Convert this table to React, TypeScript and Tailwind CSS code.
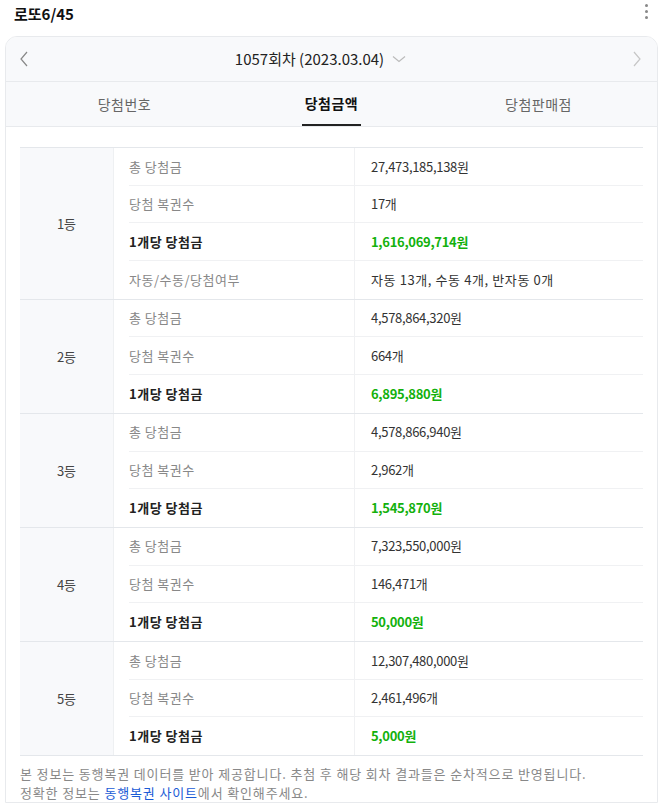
import React from 'react';

const FONT = '"Noto Sans CJK KR", "Noto Sans", sans-serif';

type Row = { label: string; value: string; strong?: boolean; wide?: boolean };

const ranks: { rank: string; rows: Row[] }[] = [
  {
    rank: '1등',
    rows: [
      { label: '총 당첨금', value: '27,473,185,138원' },
      { label: '당첨 복권수', value: '17개' },
      { label: '1개당 당첨금', value: '1,616,069,714원', strong: true },
      { label: '자동/수동/당첨여부', value: '자동 13개, 수동 4개, 반자동 0개', wide: true },
    ],
  },
  {
    rank: '2등',
    rows: [
      { label: '총 당첨금', value: '4,578,864,320원' },
      { label: '당첨 복권수', value: '664개' },
      { label: '1개당 당첨금', value: '6,895,880원', strong: true },
    ],
  },
  {
    rank: '3등',
    rows: [
      { label: '총 당첨금', value: '4,578,866,940원' },
      { label: '당첨 복권수', value: '2,962개' },
      { label: '1개당 당첨금', value: '1,545,870원', strong: true },
    ],
  },
  {
    rank: '4등',
    rows: [
      { label: '총 당첨금', value: '7,323,550,000원' },
      { label: '당첨 복권수', value: '146,471개' },
      { label: '1개당 당첨금', value: '50,000원', strong: true },
    ],
  },
  {
    rank: '5등',
    rows: [
      { label: '총 당첨금', value: '12,307,480,000원' },
      { label: '당첨 복권수', value: '2,461,496개' },
      { label: '1개당 당첨금', value: '5,000원', strong: true },
    ],
  },
];

function RankGroup({ rank, rows }: { rank: string; rows: Row[] }) {
  return (
    <div className="flex border-b border-[#e4e7eb]">
      <div className="w-[94px] shrink-0 bg-[#f8f9fb] flex items-center justify-center text-[13px] text-[#444] border-r border-[#eef0f2]">
        {rank}
      </div>
      <div className="flex-1 pl-[15px]">
        {rows.map((r, i) => (
          <div
            key={r.label}
            className={`flex h-[37.7px] items-center ${i < rows.length - 1 ? 'border-b border-[#f0f1f3]' : ''}`}
          >
            <div
              className={`w-[226px] shrink-0 h-full flex items-center border-r border-[#f0f1f3] text-[13px] tracking-[0.5px] ${
                r.strong ? 'font-bold text-[#222]' : 'text-[#888]'
              }`}
            >
              {r.label}
            </div>
            <div
              className={`pl-[16px] text-[13px] ${r.wide ? 'tracking-[0.6px]' : 'tracking-[-0.3px]'} ${
                r.strong ? 'font-bold text-[#13b10d]' : 'text-[#333]'
              }`}
            >
              {r.value}
            </div>
          </div>
        ))}
      </div>
    </div>
  );
}

export default function App() {
  return (
    <div className="w-[659px] h-[803px] overflow-hidden bg-white" style={{ fontFamily: FONT }}>
      <div className="h-[36px] flex items-start justify-between pl-[14px] pr-[10px] pt-[3px]">
        <h1 className="text-[15px] font-bold text-[#111] leading-[22px]">로또6/45</h1>
        <div className="flex flex-col gap-[3px] pt-[1px] items-center w-[6px]">
          <span className="w-[3px] h-[3px] rounded-full bg-[#888]" />
          <span className="w-[3px] h-[3px] rounded-full bg-[#888]" />
          <span className="w-[3px] h-[3px] rounded-full bg-[#888]" />
        </div>
      </div>

      <div className="ml-[5px] w-[653px] rounded-t-[12px] border border-[#e8eaed] bg-white overflow-hidden">
        <div className="bg-[#f8f9fb]">
          <div className="h-[45px] flex items-center justify-between pl-[12px] pr-[14px] border-b border-[#e8eaed]">
            <svg width="12" height="18" viewBox="0 0 12 18" fill="none">
              <path d="M9 2L3 9l6 7" stroke="#888" strokeWidth="1.2" />
            </svg>
            <div className="flex items-center gap-[8px] mr-[20px] text-[15px] text-[#222]">
              <span>1057회차 (2023.03.04)</span>
              <svg width="14" height="10" viewBox="0 0 14 10" fill="none">
                <path d="M1 2.5l6 5 6-5" stroke="#bbb" strokeWidth="1.2" />
              </svg>
            </div>
            <svg width="12" height="18" viewBox="0 0 12 18" fill="none">
              <path d="M3 2l6 7-6 7" stroke="#c6c6c6" strokeWidth="1.2" />
            </svg>
          </div>
          <div className="h-[45px] grid grid-cols-3 px-[15px] border-b border-[#e8eaed]">
            {['당첨번호', '당첨금액', '당첨판매점'].map((t, i) => (
              <div key={t} className="flex justify-center">
                <div
                  className={`h-full flex items-center px-[3px] text-[14px] tracking-[0.5px] ${
                    i === 1 ? 'font-bold text-[#111] border-b-2 border-[#222]' : 'text-[#666]'
                  }`}
                >
                  {t}
                </div>
              </div>
            ))}
          </div>
        </div>

        <div className="px-[14px] pt-[20px]">
          <div className="border-t border-[#e4e7eb]">
            {ranks.map((g) => (
              <RankGroup key={g.rank} rank={g.rank} rows={g.rows} />
            ))}
          </div>
          <div className="pt-[8px] text-[13px] leading-[19px] tracking-[0.85px] text-[#888]">
            <p>본 정보는 동행복권 데이터를 받아 제공합니다. 추첨 후 해당 회차 결과들은 순차적으로 반영됩니다.</p>
            <p>
              정확한 정보는 <span className="text-[#1a5bd6]">동행복권 사이트</span>에서 확인해주세요.
            </p>
          </div>
        </div>
      </div>
    </div>
  );
}
